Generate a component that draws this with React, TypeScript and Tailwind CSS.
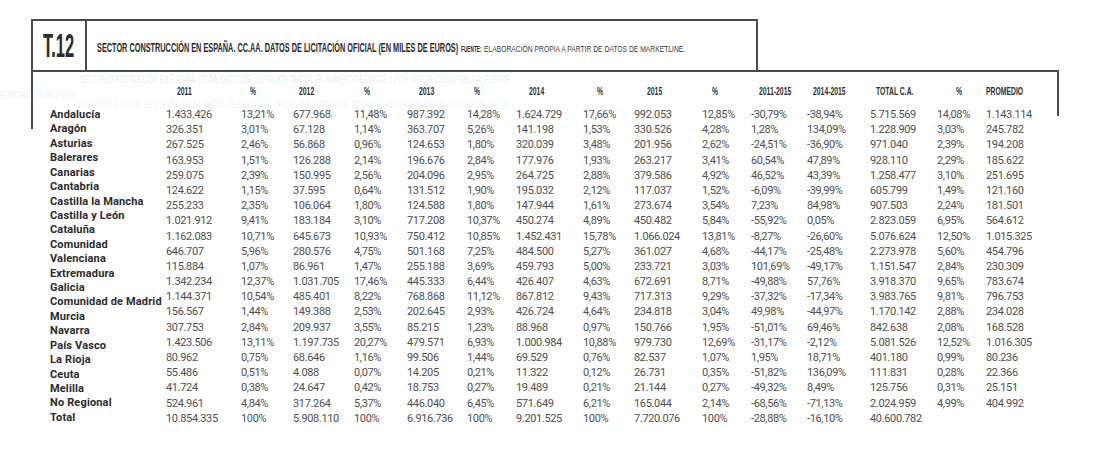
import React from 'react';

// Tabla T.12: licitación oficial por CC.AA. (miles de euros)
const NAMES = [
  'Andalucía', 'Aragón', 'Asturias', 'Balerares', 'Canarias', 'Cantabria',
  'Castilla la Mancha', 'Castilla y León', 'Cataluña', 'Comunidad', 'Valenciana',
  'Extremadura', 'Galicia', 'Comunidad de Madrid', 'Murcia', 'Navarra', 'País Vasco',
  'La Rioja', 'Ceuta', 'Melilla', 'No Regional', 'Total',
];

const ROWS: string[][] = [
  ['1.433.426', '13,21%', '677.968', '11,48%', '987.392', '14,28%', '1.624.729', '17,66%', '992.053', '12,85%', '-30,79%', '-38,94%', '5.715.569', '14,08%', '1.143.114'],
  ['326.351', '3,01%', '67.128', '1,14%', '363.707', '5,26%', '141.198', '1,53%', '330.526', '4,28%', '1,28%', '134,09%', '1.228.909', '3,03%', '245.782'],
  ['267.525', '2,46%', '56.868', '0,96%', '124.653', '1,80%', '320.039', '3,48%', '201.956', '2,62%', '-24,51%', '-36,90%', '971.040', '2,39%', '194.208'],
  ['163.953', '1,51%', '126.288', '2,14%', '196.676', '2,84%', '177.976', '1,93%', '263.217', '3,41%', '60,54%', '47,89%', '928.110', '2,29%', '185.622'],
  ['259.075', '2,39%', '150.995', '2,56%', '204.096', '2,95%', '264.725', '2,88%', '379.586', '4,92%', '46,52%', '43,39%', '1.258.477', '3,10%', '251.695'],
  ['124.622', '1,15%', '37.595', '0,64%', '131.512', '1,90%', '195.032', '2,12%', '117.037', '1,52%', '-6,09%', '-39,99%', '605.799', '1,49%', '121.160'],
  ['255.233', '2,35%', '106.064', '1,80%', '124.588', '1,80%', '147.944', '1,61%', '273.674', '3,54%', '7,23%', '84,98%', '907.503', '2,24%', '181.501'],
  ['1.021.912', '9,41%', '183.184', '3,10%', '717.208', '10,37%', '450.274', '4,89%', '450.482', '5,84%', '-55,92%', '0,05%', '2.823.059', '6,95%', '564.612'],
  ['1.162.083', '10,71%', '645.673', '10,93%', '750.412', '10,85%', '1.452.431', '15,78%', '1.066.024', '13,81%', '-8,27%', '-26,60%', '5.076.624', '12,50%', '1.015.325'],
  ['646.707', '5,96%', '280.576', '4,75%', '501.168', '7,25%', '484.500', '5,27%', '361.027', '4,68%', '-44,17%', '-25,48%', '2.273.978', '5,60%', '454.796'],
  ['115.884', '1,07%', '86.961', '1,47%', '255.188', '3,69%', '459.793', '5,00%', '233.721', '3,03%', '101,69%', '-49,17%', '1.151.547', '2,84%', '230.309'],
  ['1.342.234', '12,37%', '1.031.705', '17,46%', '445.333', '6,44%', '426.407', '4,63%', '672.691', '8,71%', '-49,88%', '57,76%', '3.918.370', '9,65%', '783.674'],
  ['1.144.371', '10,54%', '485.401', '8,22%', '768.868', '11,12%', '867.812', '9,43%', '717.313', '9,29%', '-37,32%', '-17,34%', '3.983.765', '9,81%', '796.753'],
  ['156.567', '1,44%', '149.388', '2,53%', '202.645', '2,93%', '426.724', '4,64%', '234.818', '3,04%', '49,98%', '-44,97%', '1.170.142', '2,88%', '234.028'],
  ['307.753', '2,84%', '209.937', '3,55%', '85.215', '1,23%', '88.968', '0,97%', '150.766', '1,95%', '-51,01%', '69,46%', '842.638', '2,08%', '168.528'],
  ['1.423.506', '13,11%', '1.197.735', '20,27%', '479.571', '6,93%', '1.000.984', '10,88%', '979.730', '12,69%', '-31,17%', '-2,12%', '5.081.526', '12,52%', '1.016.305'],
  ['80.962', '0,75%', '68.646', '1,16%', '99.506', '1,44%', '69.529', '0,76%', '82.537', '1,07%', '1,95%', '18,71%', '401.180', '0,99%', '80.236'],
  ['55.486', '0,51%', '4.088', '0,07%', '14.205', '0,21%', '11.322', '0,12%', '26.731', '0,35%', '-51,82%', '136,09%', '111.831', '0,28%', '22.366'],
  ['41.724', '0,38%', '24.647', '0,42%', '18.753', '0,27%', '19.489', '0,21%', '21.144', '0,27%', '-49,32%', '8,49%', '125.756', '0,31%', '25.151'],
  ['524.961', '4,84%', '317.264', '5,37%', '446.040', '6,45%', '571.649', '6,21%', '165.044', '2,14%', '-68,56%', '-71,13%', '2.024.959', '4,99%', '404.992'],
  ['10.854.335', '100%', '5.908.110', '100%', '6.916.736', '100%', '9.201.525', '100%', '7.720.076', '100%', '-28,88%', '-16,10%', '40.600.782', '', ''],
];

// cabeceras con su sangría propia respecto al borde izquierdo de la columna
const HEADERS: Array<{ label: string; pad: string }> = [
  { label: '2011', pad: 'pl-[11px]' },
  { label: '%', pad: 'pl-[9px]' },
  { label: '2012', pad: 'pl-[6px]' },
  { label: '%', pad: 'pl-[10px]' },
  { label: '2013', pad: 'pl-[12px]' },
  { label: '%', pad: 'pl-[7px]' },
  { label: '2014', pad: 'pl-[13px]' },
  { label: '%', pad: 'pl-[14px]' },
  { label: '2015', pad: 'pl-[13px]' },
  { label: '%', pad: 'pl-[10px]' },
  { label: '2011-2015', pad: 'pl-[8px]' },
  { label: '2014-2015', pad: 'pl-[6px]' },
  { label: 'TOTAL C.A.', pad: 'pl-[6px]' },
  { label: '%', pad: 'pl-[19px]' },
  { label: 'PROMEDIO', pad: 'pl-0' },
];

const GRID = 'grid grid-cols-[75px_52px_61px_53px_60px_49px_67px_51px_68px_49px_56px_63px_67px_49px_72px]';
const CONDENSED = "font-['Liberation_Sans',Arial,sans-serif]";

export default function App() {
  return (
    <div className="relative w-[1095px] h-[457px] overflow-hidden bg-white pt-[19px]">
      {/* transparencia de la página siguiente */}
      <div className={`pointer-events-none absolute left-[80px] top-[72px] text-[10px] text-[#e7eef9] whitespace-nowrap origin-left scale-x-[0.62] ${CONDENSED}`}>
        SECTOR CONSTRUCCIÓN EN ESPAÑA. CC.AA. DATOS DE LICITACIÓN OFICIAL EN NÚMERO DE OBRAS Y POR TIPO DE OBRA PÚBLICA. FUENTE
      </div>
      <div className={`pointer-events-none absolute left-[0px] top-[88px] text-[10px] text-[#ebf1fa] whitespace-nowrap origin-left scale-x-[0.6] ${CONDENSED}`}>
        ELABORACIÓN PROPIA (II)
      </div>
      <div className={`pointer-events-none absolute left-[78px] top-[97px] text-[10px] text-[#f0f4fb] whitespace-nowrap origin-left scale-x-[0.62] ${CONDENSED}`}>
        T.12 CONSTRUCCIÓN EN ESPAÑA. CC.AA. DATOS DE LICITACIÓN OFICIAL (EN NÚMERO DE OBRAS) ELABORACIÓN PROPIA A PARTIR DE DATOS
      </div>

      {/* cabecera con el número de tabla */}
      <div className="relative ml-[31px] flex h-[51px] w-[727px] border-x-2 border-t-2 border-[#4a4a4a]">
        <div className="flex w-[54px] items-center justify-center border-r-2 border-[#4a4a4a]">
          <span className="inline-block w-[32px]">
            <span className={`inline-block origin-left scale-x-[0.5] text-[33px] font-bold leading-none text-[#2a2a2a] whitespace-nowrap ${CONDENSED}`}>
              T.12
            </span>
          </span>
        </div>
        <div className={`flex items-center pl-[10px] pt-[3px] text-[#2a2a2a] ${CONDENSED}`}>
          <span className="inline-block w-[364px]">
            <span className="inline-block origin-left scale-x-[0.61] text-[12px] font-bold whitespace-nowrap">
              SECTOR CONSTRUCCIÓN EN ESPAÑA. CC.AA. DATOS DE LICITACIÓN OFICIAL (EN MILES DE EUROS)
            </span>
          </span>
          <span className="inline-block w-[23px]">
            <span className="inline-block origin-left scale-x-[0.5] text-[9.5px] font-bold whitespace-nowrap">
              FUENTE:
            </span>
          </span>
          <span className="inline-block w-[205px]">
            <span className="inline-block origin-left scale-x-[0.71] text-[9.5px] text-[#3a3a3a] whitespace-nowrap">
              ELABORACIÓN PROPIA A PARTIR DE DATOS DE MARKETLINE.
            </span>
          </span>
        </div>
      </div>

      {/* cuerpo de la tabla */}
      <div className="relative ml-[31px] flex w-[1028px] border-t-2 border-[#4a4a4a]">
        <span className="absolute left-0 top-0 h-[57px] border-l-2 border-[#4a4a4a]" />
        <span className="absolute right-0 top-0 h-[44px] border-r-2 border-[#4a4a4a]" />

        <div className="w-[135px] pl-[19px] pt-[36px]">
          {NAMES.map((n) => (
            <div
              key={n}
              className="h-[14.43px] font-['Roboto',sans-serif] text-[11px] font-bold leading-[14.43px] tracking-[0.15px] text-[#2b2b2b] whitespace-nowrap"
            >
              {n}
            </div>
          ))}
        </div>

        <div className="flex flex-col">
          <div className={`${GRID} h-[35px] pt-[12px]`}>
            {HEADERS.map((h, i) => (
              <div key={i} className={`${h.pad} leading-[11px]`}>
                <span className={`inline-block origin-left scale-x-[0.62] text-[11px] font-bold text-[#2e2e2e] whitespace-nowrap ${CONDENSED}`}>
                  {h.label}
                </span>
              </div>
            ))}
          </div>
          {ROWS.map((r, ri) => (
            <div key={ri} className={`${GRID} h-[15.2px]`}>
              {r.map((v, ci) => (
                <div
                  key={ci}
                  className="font-['Roboto',sans-serif] text-[11px] leading-[15.2px] tracking-[-0.35px] text-[#4f4f4f] whitespace-nowrap"
                >
                  {v}
                </div>
              ))}
            </div>
          ))}
        </div>
      </div>
    </div>
  );
}
